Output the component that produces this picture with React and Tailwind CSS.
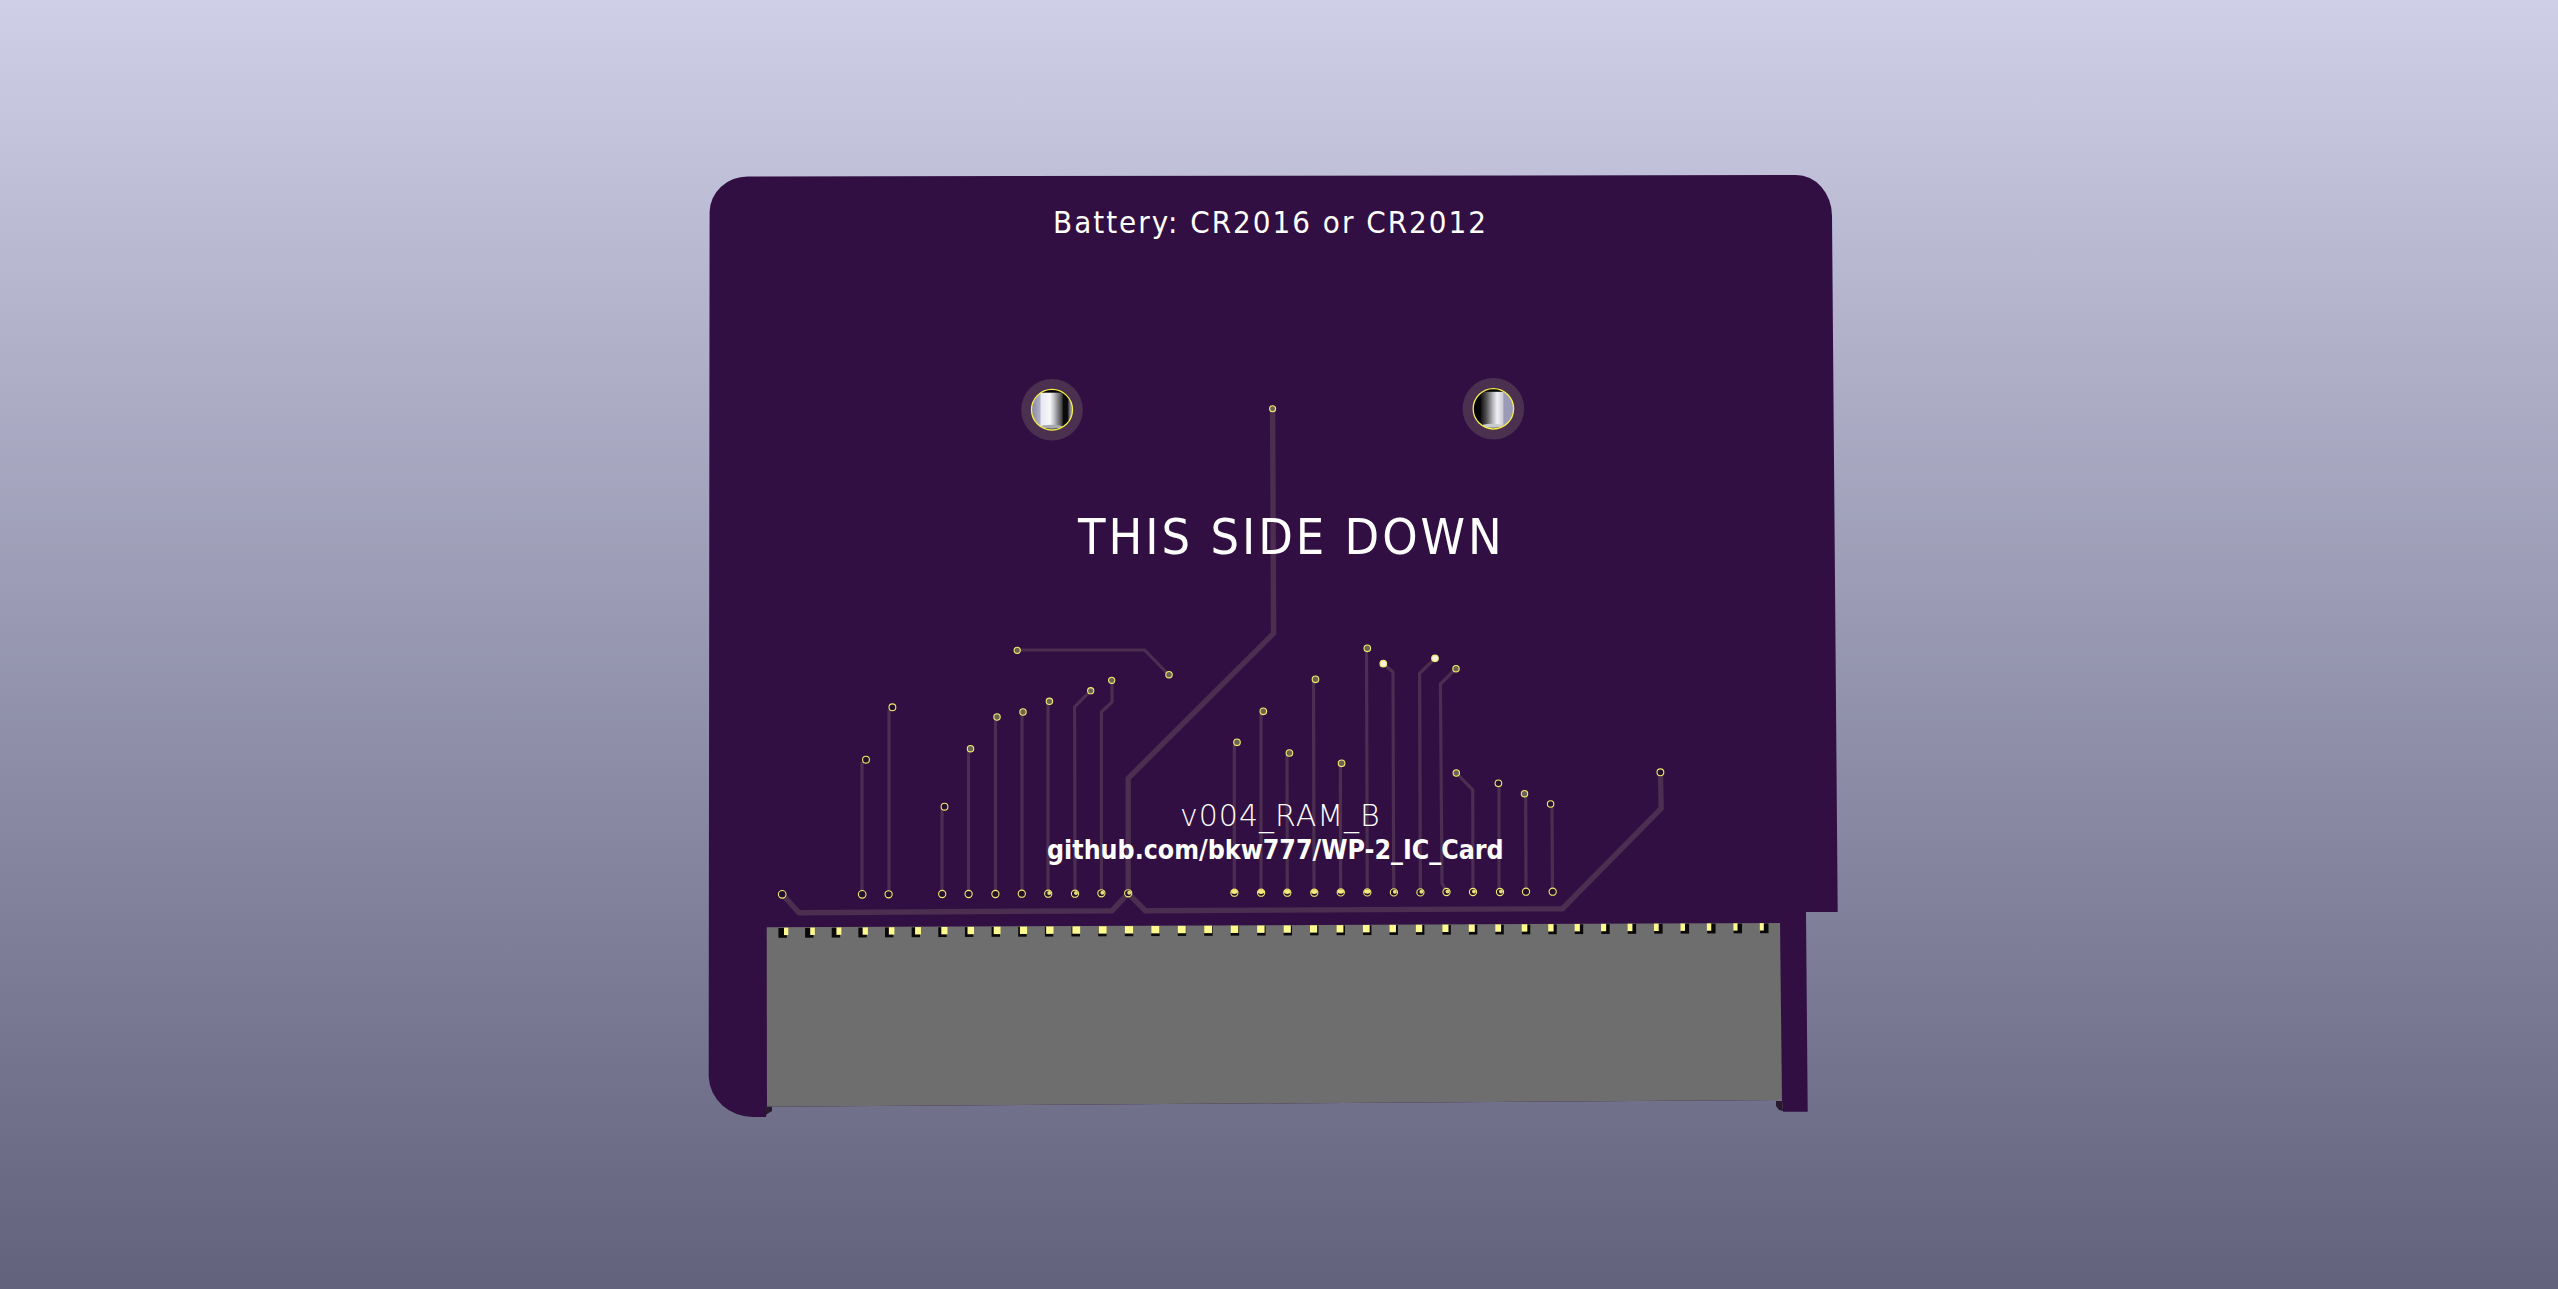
import React from "react";

// ── PCB data (page pixels) ──────────────────────────────────

const THIN_TRACES = [
  "862,894 862,762",
  "889,894 889,710",
  "942,894 942,809",
  "968.5,894 968.5,751",
  "995.5,894 995.5,720",
  "1022,894 1022,715",
  "1048,894 1048,704",
  "1075,894 1074.6,707 1090.7,690.7",
  "1101.4,893 1101.4,712 1112,702 1112,680",
  "1017,650 1144.6,650 1169,675",
  "1234.3,893 1234.3,745",
  "1261,893 1261,714",
  "1287.3,893 1287,756",
  "1314,893 1313.5,682",
  "1340.6,892 1340.4,766",
  "1367.3,892 1366.5,651",
  "1383.3,663.7 1393,672 1393.7,892",
  "1435,658.3 1419.6,673.3 1420.4,892",
  "1456,668.7 1440.4,684 1442,883 1446.5,892",
  "1456.3,773 1472.7,790 1473,892",
  "1499,892 1499,786",
  "1526,892 1525.7,796",
  "1552.5,892 1552,807",
];

const WIDE_TRACES = [
  "1272.6,408 1273.6,633.3 1128.2,778.3 1128.2,893.3",
  "782.2,894.3 799,912.7 1112,910.7 1128.2,893.3 1145.4,910.7 1562.4,908.7 1661.2,808.3 1660.4,772.3",
];

// x, y, r, tone
const VIAS = [
  [782.2, 894.3, 3.8, "dark"], [862.2, 894.3, 3.8, "dark"], [888.6, 894.3, 3.6, "dark"],
  [942.2, 894, 3.6, "dark"], [968.6, 894, 3.6, "dark"], [995.4, 894, 3.6, "dark"],
  [1021.8, 893.7, 3.6, "dark"], [1048.2, 893.7, 3.6, "hint"], [1075, 893.7, 3.6, "hint"],
  [1101.4, 893.3, 3.6, "hint"], [1128.2, 893.3, 3.6, "hint"], [1234.4, 892.7, 3.6, "lit"],
  [1261.1, 892.7, 3.6, "lit"], [1287.3, 892.7, 3.6, "lit"], [1314.3, 892.7, 3.6, "lit"],
  [1340.8, 892.4, 3.6, "lit"], [1367.3, 892.4, 3.6, "lit"], [1393.9, 892.4, 3.6, "hint"],
  [1420.4, 892.4, 3.6, "hint"], [1446.5, 892, 3.6, "hint"], [1473, 892, 3.6, "hint"],
  [1500, 892, 3.6, "hint"], [1526, 891.7, 3.6, "dark"], [1552.7, 891.7, 3.6, "dark"],
  [866, 759.7, 3.4, "dark"], [892.4, 707.3, 3.4, "dark"], [944.5, 806.7, 3.4, "dark"],
  [970.5, 748.7, 3.2, "grey"], [997, 717, 3.2, "grey"], [1023, 712, 3.2, "grey"],
  [1049.4, 701.3, 3.2, "grey"], [1090.7, 690.7, 3.1, "grey"], [1111.7, 680.3, 3.1, "grey"],
  [1017.2, 650.3, 3.1, "grey"], [1169, 674.7, 3.2, "grey"], [1272.6, 408.7, 3, "grey"],
  [1237, 742.3, 3.3, "grey"], [1263.3, 711.3, 3.3, "grey"], [1289.4, 753, 3.3, "grey"],
  [1315.5, 679.3, 3.3, "grey"], [1341.6, 763.3, 3.3, "grey"], [1367.3, 648.3, 3.3, "grey"],
  [1383.3, 663.7, 3.3, "white"], [1435, 658.3, 3.3, "white"], [1456, 668.7, 3.2, "grey"],
  [1456.3, 773, 3.2, "grey"], [1498.4, 783.3, 3.3, "dark"], [1524.5, 793.7, 3.2, "grey"],
  [1550.6, 804, 3.2, "dark"], [1660.4, 772.3, 3.4, "dark"],
];

const TONES = { dark: "#23102d", hint: "#23102d", lit: "#23102d", grey: "#6b6455", white: "#f4f2e6" };

const lerp = (a, b, t) => a + (b - a) * t;

// contact fingers seen in perspective: the yellow face slides over its black side
function contactGeometry(i) {
  const xc = 1129 + 26.45 * (i - 13);
  const left = i < 13;
  const t = left ? i / 13 : (i - 13) / 24;
  const blackOffset = left ? lerp(-2.5, 0, t) : lerp(0, 0.5, t);
  const halfWidth = left ? lerp(2.15, 4.2, t) : lerp(4.2, 2, t);
  const yellowOffset = left ? lerp(1, 0, t) : lerp(0, -2, t);
  const top = 927.7 - (i / 37) * 4.6;
  return { xc, blackOffset, halfWidth, yellowOffset, top };
}

// ── Sub-components ──────────────────────────────────────────

function Contacts() {
  return (
    <g>
      {Array.from({ length: 38 }, (_, i) => {
        const { xc, blackOffset, halfWidth, yellowOffset, top } = contactGeometry(i);
        return (
          <g key={i}>
            <rect x={xc + blackOffset - 4.2} y={top + 0.3} width={8.4} height={9.8} fill="#0a0808" />
            <rect x={xc + yellowOffset - halfWidth} y={top} width={halfWidth * 2} height={7.4} fill="#fdf98f" />
          </g>
        );
      })}
    </g>
  );
}

function Via({ x, y, r, tone }) {
  return (
    <g>
      <circle cx={x} cy={y} r={r} fill={TONES[tone]} />
      {tone === "hint" && <circle cx={x + 1} cy={y - 0.6} r={r * 0.55} fill="#e6dc78" />}
      {tone === "lit" && <ellipse cx={x} cy={y - 0.9} rx={r * 0.9} ry={r * 0.6} fill="#f2e97f" />}
      <circle cx={x} cy={y} r={r} fill="none" stroke="#f4ea6c" strokeWidth="1.1" />
    </g>
  );
}

function MountingHole({ id, cx, cy, ringRx, ringRy, mirrored }) {
  return (
    <g>
      <ellipse cx={cx} cy={cy} rx={30.8} ry={30.8} fill="#4c3050" />
      <clipPath id={id}>
        <ellipse cx={cx} cy={cy} rx={ringRx} ry={ringRy} />
      </clipPath>
      <g clipPath={`url(#${id})`}>
        <rect x={cx - 22} y={cy - 22} width={44} height={44} fill="#050505" />
        {mirrored ? (
          <>
            <rect x={cx + 9.5} y={cy - 22} width={12.5} height={44} fill="#9b9bb8" />
            <rect x={cx - 12.5} y={cy - 17} width={22.5} height={34} fill="url(#pinRight)" />
            <ellipse cx={cx - 1.5} cy={cy + 17} rx={11.2} ry={2} fill="#c9c9d0" />
          </>
        ) : (
          <>
            <rect x={cx - 22} y={cy - 22} width={11} height={44} fill="url(#wellLeft)" />
            <rect x={cx - 11.5} y={cy - 17} width={32} height={34} fill="url(#pinLeft)" />
            <ellipse cx={cx - 0.5} cy={cy + 17} rx={11} ry={2} fill="#a9a9b4" />
          </>
        )}
      </g>
      <ellipse cx={cx} cy={cy} rx={ringRx} ry={ringRy} fill="none" stroke="#f6f04a" strokeWidth="1.3" />
    </g>
  );
}

function Board() {
  return (
    <svg className="absolute inset-0 block" width="2558" height="1289" viewBox="0 0 2558 1289">
      <defs>
        <linearGradient id="wellLeft" x1="0" x2="1" y1="0" y2="0">
          <stop offset="0" stopColor="#7f7f9c" />
          <stop offset="1" stopColor="#b4b4cc" />
        </linearGradient>
        <linearGradient id="pinLeft" x1="0" x2="1" y1="0" y2="0">
          <stop offset="0" stopColor="#e6e6f2" />
          <stop offset="0.3" stopColor="#f7f7fa" />
          <stop offset="0.42" stopColor="#c4c4c8" />
          <stop offset="0.66" stopColor="#4a4a4c" />
          <stop offset="0.72" stopColor="#0a0a0a" />
          <stop offset="0.84" stopColor="#0a0a0a" />
          <stop offset="0.93" stopColor="#8a8a90" />
          <stop offset="1" stopColor="#8a8a90" />
        </linearGradient>
        <linearGradient id="pinRight" x1="0" x2="1" y1="0" y2="0">
          <stop offset="0" stopColor="#111111" />
          <stop offset="0.25" stopColor="#555558" />
          <stop offset="0.55" stopColor="#bdbdc2" />
          <stop offset="0.72" stopColor="#f0f0f4" />
          <stop offset="1" stopColor="#c8c8d4" />
        </linearGradient>
      </defs>

      <path
        d="M748 176.5 L1796 175 A36 41 0 0 1 1832 216 L1837.7 912 L1806 912 L1807.7 1111.7 L1783 1111.7 L1782 1100 L767 1106.7 L766 1117 L753 1117 A44 42 0 0 1 708.7 1077 L709.6 212 A38 36 0 0 1 748 176.5 Z"
        fill="#320f42"
      />

      {THIN_TRACES.map((points) => (
        <polyline key={points} points={points} fill="none" stroke="#4b2e50" strokeWidth="3.2" />
      ))}
      {WIDE_TRACES.map((points) => (
        <polyline key={points} points={points} fill="none" stroke="#4b2e50" strokeWidth="5.4" />
      ))}

      <polygon points="766.7,927.3 1780,923 1782,1100 767,1106.7" fill="#6e6e6e" />
      <polygon points="765,1106.7 772,1106.7 772,1111 767,1114 765,1116.5" fill="#2a1a2e" />
      <polygon points="1776,1101 1782,1101 1783,1111 1779,1110 1776,1106" fill="#2a1a2e" />
      <Contacts />

      {VIAS.map(([x, y, r, tone]) => (
        <Via key={`${x}-${y}`} x={x} y={y} r={r} tone={tone} />
      ))}

      <MountingHole id="holeLeft" cx={1052} cy={409.7} ringRx={20.5} ringRy={20.3} />
      <MountingHole id="holeRight" cx={1493.4} cy={408.8} ringRx={20.2} ringRy={20.2} mirrored />
    </svg>
  );
}

// ── Main Page ───────────────────────────────────────────────

export default function App() {
  return (
    <div className="relative h-[1289px] w-[2558px] overflow-hidden bg-gradient-to-b from-[#cfcfe8] to-[#62627c] font-['DejaVu_Sans',sans-serif] leading-none text-white [font-stretch:condensed]">
      <Board />
      <span className="absolute left-[1053px] top-[206.5px] whitespace-nowrap text-[31px] tracking-[2px]">
        Battery: CR2016 or CR2012
      </span>
      <span className="absolute left-[1078px] top-[511.7px] whitespace-nowrap text-[50px] tracking-[3px]">
        THIS SIDE DOWN
      </span>
      <span className="absolute left-[1180px] top-[801.3px] whitespace-nowrap text-[30px] font-extralight tracking-[1px]">
        v004_RAM_B
      </span>
      <span className="absolute left-[1047px] top-[836.9px] whitespace-nowrap text-[26.5px] font-bold tracking-[0px]">
        github.com/bkw777/WP-2_IC_Card
      </span>
    </div>
  );
}
